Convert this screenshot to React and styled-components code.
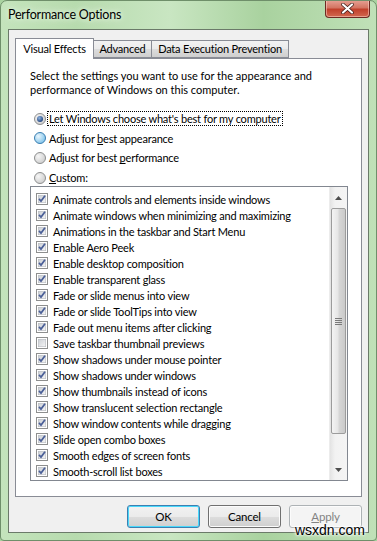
import React from "react";
import styled, { createGlobalStyle } from "styled-components";

const GlobalStyle = createGlobalStyle`
  html, body {
    margin: 0;
    padding: 0;
    background: #a9d3a0;
  }
  body {
    font-family: Lato, Roboto, sans-serif;
    font-size: 11px;
    letter-spacing: -0.2px;
    color: #000;
  }
`;

const items = [
  ["Animate controls and elements inside windows", true],
  ["Animate windows when minimizing and maximizing", true],
  ["Animations in the taskbar and Start Menu", true],
  ["Enable Aero Peek", true],
  ["Enable desktop composition", true],
  ["Enable transparent glass", true],
  ["Fade or slide menus into view", true],
  ["Fade or slide ToolTips into view", true],
  ["Fade out menu items after clicking", true],
  ["Save taskbar thumbnail previews", false],
  ["Show shadows under mouse pointer", true],
  ["Show shadows under windows", true],
  ["Show thumbnails instead of icons", true],
  ["Show translucent selection rectangle", true],
  ["Show window contents while dragging", true],
  ["Slide open combo boxes", true],
  ["Smooth edges of screen fonts", true],
  ["Smooth-scroll list boxes", true],
];

const Window = styled.div`
  position: relative;
  width: 377px;
  height: 541px;
  box-sizing: border-box;
  display: flex;
  flex-direction: column;
  padding: 0 7px 7px 7px;
  border-radius: 7px 7px 4px 4px;
  border: 1px solid #6f8f6a;
  background: linear-gradient(90deg, #c4e4bc 0%, #b7dbae 20%, #c9e6c2 45%, #a9d29f 70%, #c0e1b8 100%);
  overflow: hidden;
`;

const TitleBar = styled.div`
  height: 28px;
  display: flex;
  align-items: flex-start;
  justify-content: space-between;
`;

const Title = styled.div`
  padding-top: 6px;
  font-size: 12.5px;
  color: #000;
  text-shadow: 0 0 8px #e8f6e4, 0 0 4px #e8f6e4;
`;

const CloseButton = styled.div`
  width: 45px;
  height: 18px;
  margin-top: -1px;
  margin-right: -1px;
  box-sizing: border-box;
  border: 1px solid #6d2a22;
  border-top: none;
  border-radius: 0 0 4px 4px;
  background: linear-gradient(180deg, #e6a396 0%, #d47563 45%, #c1402b 55%, #d2684f 100%);
  display: flex;
  align-items: center;
  justify-content: center;
  box-shadow: inset 0 0 0 1px rgba(255, 220, 210, 0.5);
`;

const Client = styled.div`
  flex: 1;
  background: #f0f0f0;
  border: 1px solid #6b7a69;
  display: flex;
  flex-direction: column;
  padding: 7px 6px 0 6px;
`;

const TabStrip = styled.div`
  display: flex;
  align-items: flex-end;
  height: 21px;
  position: relative;
  z-index: 1;
`;

const Tab = styled.div`
  box-sizing: border-box;
  width: ${(p) => p.$w}px;
  text-align: center;
  height: ${(p) => (p.$active ? "21px" : "18px")};
  padding-top: ${(p) => (p.$active ? "3px" : "1px")};
  margin-bottom: ${(p) => (p.$active ? "-1px" : "0")};
  border: 1px solid #898c95;
  border-bottom: ${(p) => (p.$active ? "none" : "1px solid #898c95")};
  margin-left: ${(p) => (p.$first ? "0" : "-1px")};
  background: ${(p) =>
    p.$active ? "#fff" : "linear-gradient(180deg, #f2f2f2 0%, #ebebeb 50%, #dddddd 51%, #cfcfcf 100%)"};
  line-height: 14px;
  white-space: nowrap;
`;

const Panel = styled.div`
  height: 439px;
  box-sizing: border-box;
  background: #fff;
  border: 1px solid #898c95;
  padding: 10px 13px 0 14px;
  display: flex;
  flex-direction: column;
`;

const Intro = styled.p`
  margin: 0;
  line-height: 14px;
  letter-spacing: 0;
`;

const RadioGroup = styled.div`
  display: flex;
  flex-direction: column;
  margin-top: 12px;
  margin-left: 4px;
`;

const RadioRow = styled.label`
  display: flex;
  align-items: center;
  gap: 1px;
  height: 19.6px;

  svg {
    flex-shrink: 0;
  }
`;

const RadioLabel = styled.span`
  line-height: 13px;
  padding: 0 1px;
  border: 1px dotted ${(p) => (p.$focus ? "#000" : "transparent")};
`;

const ListBox = styled.div`
  margin-top: -1px;
  height: 295px;
  box-sizing: border-box;
  border: 1px solid #828790;
  display: flex;
`;

const List = styled.div`
  flex: 1;
  min-width: 0;
  padding: 4px 0 0 5px;
  overflow: hidden;
`;

const Row = styled.div`
  height: 16px;
  display: flex;
  align-items: center;
  gap: 5px;
  white-space: nowrap;

  svg {
    flex-shrink: 0;
  }
`;

const ScrollBar = styled.div`
  width: 17px;
  flex-shrink: 0;
  display: flex;
  flex-direction: column;
  background: linear-gradient(90deg, #e3e3e3 0%, #f2f2f2 30%, #f4f4f4 100%);
  border-left: 1px solid #ececec;
`;

const ArrowButton = styled.div`
  height: 21px;
  display: flex;
  align-items: center;
  justify-content: center;
`;

const Thumb = styled.div`
  height: 226px;
  margin: 0 1px;
  box-sizing: border-box;
  border: 1px solid #9c9c9c;
  border-radius: 2px;
  background: linear-gradient(90deg, #f4f4f4 0%, #e6e6e6 45%, #d6d6d6 55%, #cacaca 100%);
  display: flex;
  align-items: center;
  justify-content: center;
`;

const Track = styled.div`
  flex: 1;
`;

const ButtonRow = styled.div`
  display: flex;
  justify-content: flex-end;
  gap: 8px;
  padding-top: 8px;
`;

const Button = styled.button`
  font: inherit;
  font-size: 11.5px;
  letter-spacing: inherit;
  height: 23px;
  box-sizing: border-box;
  width: 73px;
  border-radius: 3px;
  border: 1px solid ${(p) => (p.$default ? "#3c7fb1" : p.disabled ? "#adb2b5" : "#707070")};
  background: ${(p) =>
    p.disabled
      ? "#f4f4f4"
      : "linear-gradient(180deg, #f2f2f2 0%, #ebebeb 50%, #dddddd 51%, #cfcfcf 100%)"};
  box-shadow: ${(p) => (p.$default ? "inset 0 0 0 1px #48d8fb" : "inset 0 0 0 1px #fcfcfc")};
  color: ${(p) => (p.disabled ? "#838383" : "#000")};
  padding: 0;
`;

const Underline = styled.span`
  text-decoration: underline;
`;

const Watermark = styled.div`
  position: absolute;
  right: 11px;
  bottom: 4px;
  font-family: "Liberation Sans", Arial, sans-serif;
  font-size: 14px;
  letter-spacing: 0;
  line-height: 12px;
  color: #000;
  text-shadow: 0 0 2px #fff, 0 0 3px #fff, 0 0 4px #fff;
`;

const Checkbox = ({ checked }) => (
  <svg width="12" height="12" viewBox="0 0 12 12">
    <defs>
      <linearGradient id="cbg" x1="0" y1="0" x2="1" y2="1">
        <stop offset="0" stopColor="#cbcfd5" />
        <stop offset="1" stopColor="#f6f6f6" />
      </linearGradient>
    </defs>
    <rect x="0.5" y="0.5" width="11" height="11" fill="#fff" stroke="#8e8f8f" />
    <rect x="2.3" y="2.3" width="7.4" height="7.4" fill="url(#cbg)" stroke="#b6bac0" strokeWidth="0.6" />
    {checked && (
      <path d="M3 5.9 L5 8.1 L9 2.8" fill="none" stroke="#4a5f97" strokeWidth="1.7" />
    )}
  </svg>
);

const Radio = ({ checked, hover }) => (
  <svg width="12" height="12" viewBox="0 0 12 12">
    <defs>
      <radialGradient id={hover ? "rgh" : "rg"} cx="0.35" cy="0.35" r="0.7">
        <stop offset="0" stopColor={hover ? "#eaf6fd" : "#f6f6f6"} />
        <stop offset="1" stopColor={hover ? "#7fc3ea" : "#cdcdcd"} />
      </radialGradient>
      <radialGradient id="rdot" cx="0.4" cy="0.35" r="0.7">
        <stop offset="0" stopColor="#8fb4e0" />
        <stop offset="1" stopColor="#1b3e7a" />
      </radialGradient>
    </defs>
    <circle cx="6" cy="6" r="5.5" fill={`url(#${hover ? "rgh" : "rg"})`} stroke={hover ? "#3c7fb1" : "#8e8f8f"} />
    {checked && <circle cx="6" cy="6" r="3" fill="url(#rdot)" />}
  </svg>
);

export default function App() {
  return (
    <>
      <GlobalStyle />
      <Window>
        <TitleBar>
          <Title>Performance Options</Title>
          <CloseButton>
            <svg width="13" height="11" viewBox="0 0 13 11">
              <path d="M2 1.5 L11 9.5 M11 1.5 L2 9.5" stroke="#3b1a16" strokeWidth="3.6" strokeLinecap="round" />
              <path d="M2 1.5 L11 9.5 M11 1.5 L2 9.5" stroke="#fff" strokeWidth="2.2" strokeLinecap="round" />
            </svg>
          </CloseButton>
        </TitleBar>
        <Client>
          <TabStrip>
            <Tab $active $first $w={79}>Visual Effects</Tab>
            <Tab $w={59}>Advanced</Tab>
            <Tab $w={138}>Data Execution Prevention</Tab>
          </TabStrip>
          <Panel>
            <Intro>
              Select the settings you want to use for the appearance and
              <br />
              performance of Windows on this computer.
            </Intro>
            <RadioGroup>
              <RadioRow>
                <Radio checked />
                <RadioLabel $focus>Let Windows choose what's best for my computer</RadioLabel>
              </RadioRow>
              <RadioRow>
                <Radio hover />
                <RadioLabel>
                  Adjust for <Underline>b</Underline>est appearance
                </RadioLabel>
              </RadioRow>
              <RadioRow>
                <Radio />
                <RadioLabel>
                  Adjust for best <Underline>p</Underline>erformance
                </RadioLabel>
              </RadioRow>
              <RadioRow>
                <Radio />
                <RadioLabel>
                  <Underline>C</Underline>ustom:
                </RadioLabel>
              </RadioRow>
            </RadioGroup>
            <ListBox>
              <List>
                {items.map(([label, checked]) => (
                  <Row key={label}>
                    <Checkbox checked={checked} />
                    <span>{label}</span>
                  </Row>
                ))}
              </List>
              <ScrollBar>
                <ArrowButton>
                  <svg width="7" height="4" viewBox="0 0 7 4">
                    <path d="M0 4 L3.5 0 L7 4 Z" fill="#4d4d4d" />
                  </svg>
                </ArrowButton>
                <Thumb>
                  <svg width="7" height="8" viewBox="0 0 7 8">
                    <path d="M0 1.5 H7 M0 3.5 H7 M0 5.5 H7 M0 7.5 H7" stroke="#7a7a7a" strokeWidth="1" />
                  </svg>
                </Thumb>
                <Track />
                <ArrowButton>
                  <svg width="7" height="4" viewBox="0 0 7 4">
                    <path d="M0 0 L3.5 4 L7 0 Z" fill="#4d4d4d" />
                  </svg>
                </ArrowButton>
              </ScrollBar>
            </ListBox>
          </Panel>
          <ButtonRow>
            <Button $default>OK</Button>
            <Button>Cancel</Button>
            <Button disabled>
              <Underline>A</Underline>pply
            </Button>
          </ButtonRow>
        </Client>
        <Watermark>wsxdn.com</Watermark>
      </Window>
    </>
  );
}
